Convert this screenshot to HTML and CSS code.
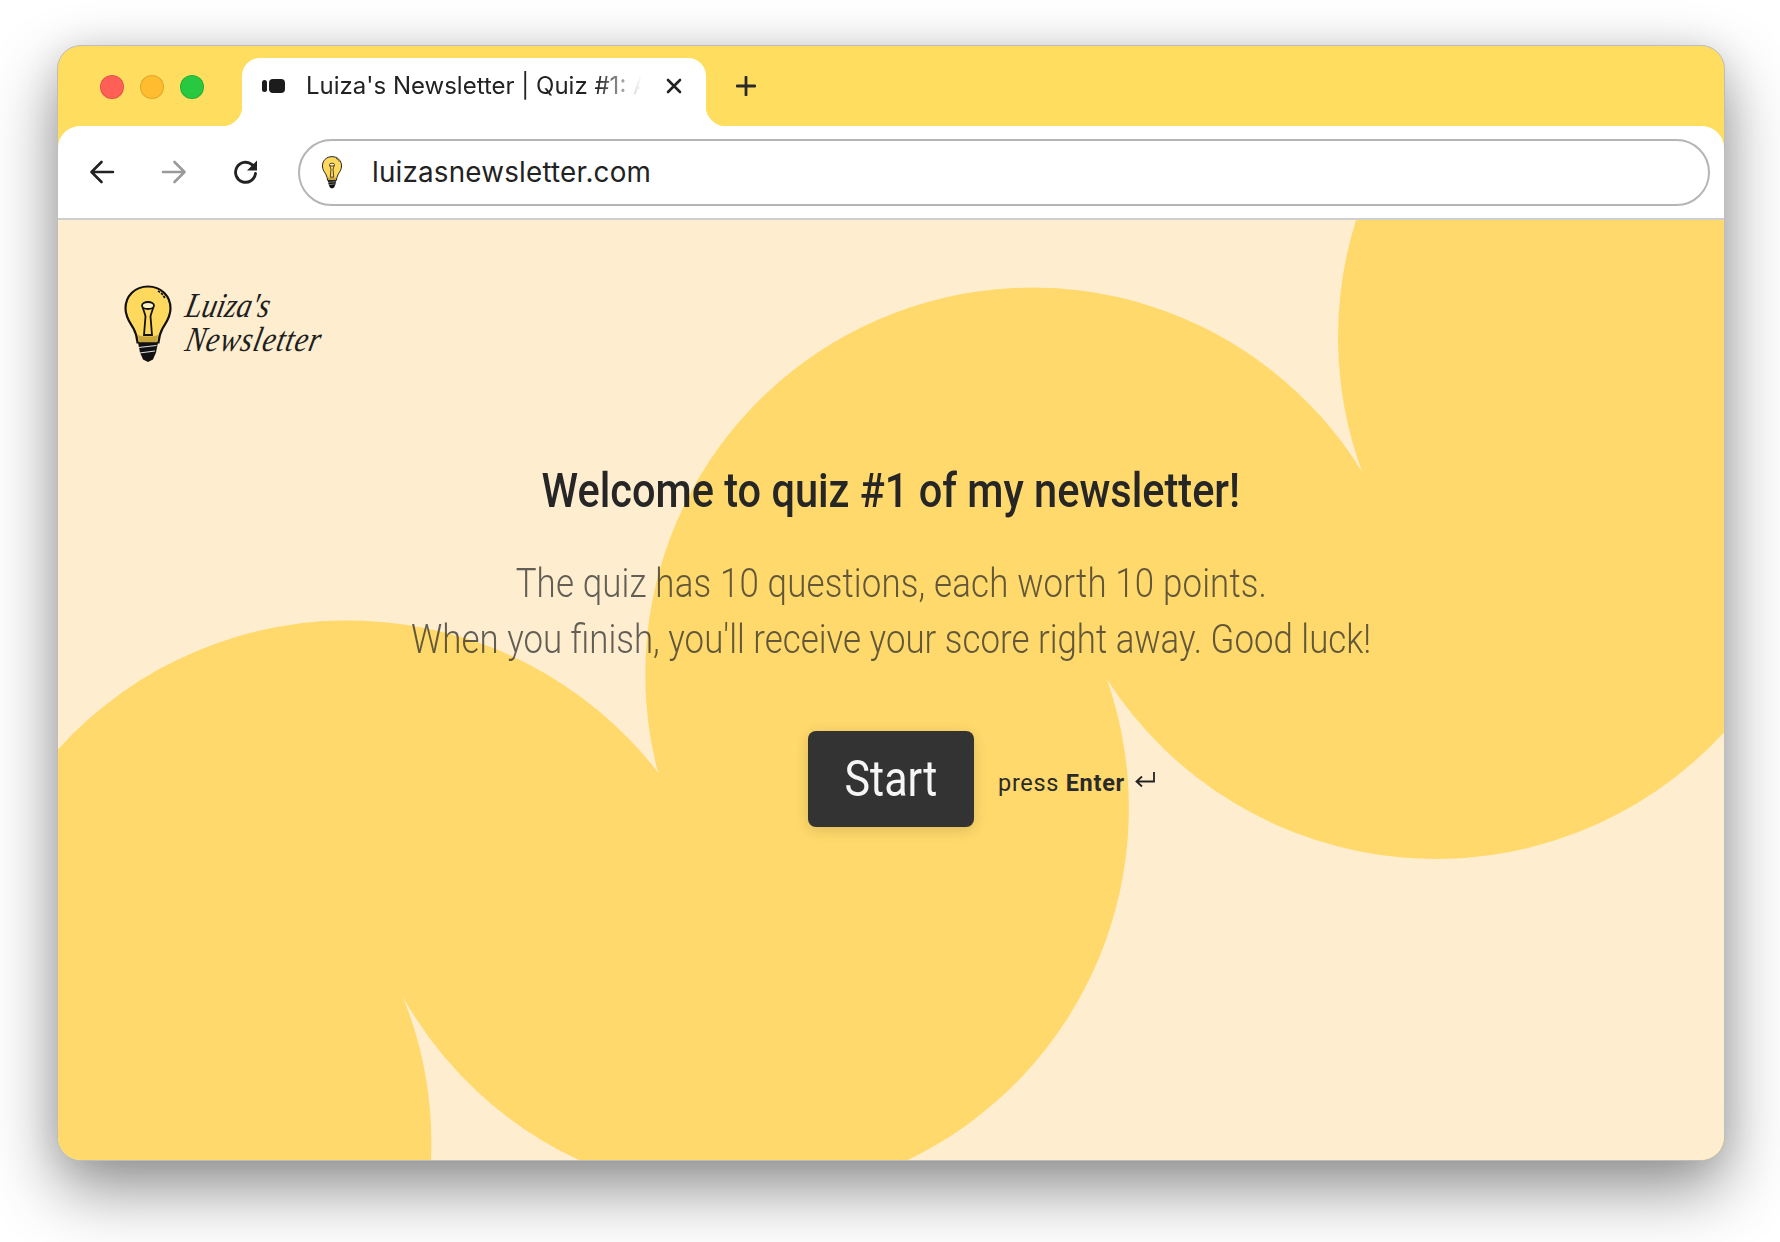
FILE: index.html
```html
<!DOCTYPE html>
<html lang="en">
<head>
<meta charset="utf-8">
<title>Luiza's Newsletter | Quiz #1</title>
<link rel="stylesheet" href="styles.css">
</head>
<body>
<svg class="defs" width="0" height="0" aria-hidden="true">
  <symbol id="bulb" viewBox="0 0 48 78">
    <path d="M24 1.500C11 1.500 1.500 11 1.500 23.500c0 9 4.500 14 8 20 2.500 4.500 3.500 8.500 4 14h21c.5-5.500 1.500-9.500 4-14 3.500-6 8-11 8-20C46.500 11 37 1.500 24 1.500z" fill="#ffd95e" stroke="#111" stroke-width="2.200"/>
    <path d="M14 50c6 2 14 2 20 0l-.8 7.500H14.800z" fill="#caa53a"/>
    <path d="M18.500 21.500c1 4 2.500 7 3 10l-.5 6-1 12.500h8l-1-12.500-.5-6c.5-3 2-6 3-10" fill="none" stroke="#111" stroke-width="1.800"/>
    <ellipse cx="24" cy="20.500" rx="6" ry="3.500" fill="#fff2c4" stroke="#111" stroke-width="1.800"/>
    <path d="M34 6c3 1.500 5.500 4 7 7.500" fill="none" stroke="#111" stroke-width="1.800" stroke-dasharray="2.500 1.200"/>
    <path d="M14 57.500h20l-1 5-1 5-3 7-5 2.500-5-2.500-3-7-1-5z" fill="#111"/>
    <path d="M14.500 62.500l18-2M15.500 68l15.500-2" stroke="#ddd" stroke-width="1.200"/>
  </symbol>
</svg>
<div class="window">
  <header class="tabstrip">
    <div class="traffic">
      <span class="light light-red"></span>
      <span class="light light-amber"></span>
      <span class="light light-green"></span>
    </div>
    <div class="tab">
      <svg class="tab-icon" viewBox="0 0 23 14"><rect x="0" y="1" width="5" height="12" rx="2.500" fill="#1c1c1c"/><rect x="7" y="0" width="16" height="14" rx="4" fill="#1c1c1c"/></svg>
      <span class="tab-title">Luiza's Newsletter | Quiz #1: A</span>
      <svg class="tab-close" viewBox="0 0 16 16"><path d="M2 2l12 12M14 2L2 14" stroke="#222" stroke-width="2.600" stroke-linecap="round"/></svg>
    </div>
    <svg class="new-tab" viewBox="0 0 20 20"><path d="M10 1v18M1 10h18" stroke="#2a2a2a" stroke-width="2.800" stroke-linecap="round"/></svg>
  </header>
  <nav class="toolbar">
    <svg class="nav-icon" viewBox="0 0 26 26"><path d="M24 13H3M12.500 3L2.500 13l10 10" fill="none" stroke="#222" stroke-width="2.600" stroke-linecap="round" stroke-linejoin="round"/></svg>
    <svg class="nav-icon nav-off" viewBox="0 0 26 26"><path d="M2 13h21M13.500 3l10 10-10 10" fill="none" stroke="#9a9a9a" stroke-width="2.600" stroke-linecap="round" stroke-linejoin="round"/></svg>
    <svg class="nav-icon nav-reload" viewBox="0 0 26 26"><path d="M22.500 14.500A10 10 0 1 1 19 5.600L22 8.500" fill="none" stroke="#222" stroke-width="2.900" stroke-linecap="round"/><path d="M24 1.500v10h-10z" fill="#222"/></svg>
    <div class="urlbar">
      <svg class="url-icon"><use href="#bulb"/></svg>
      <span class="url-text">luizasnewsletter.com</span>
    </div>
  </nav>
  <main class="page">
    <svg class="blobs" viewBox="0 0 1666 941" preserveAspectRatio="none" aria-hidden="true">
      <path d="M0 530A391 391 0 0 1 600 553A387 387 0 0 1 1304 252A391 391 0 0 1 1298 0H1666V513A391 391 0 0 1 1049 460A391 391 0 0 1 850 941H521A391 391 0 0 1 345 778A391 391 0 0 1 373 941H0Z"/>
    </svg>
    <div class="logo">
      <svg class="logo-bulb"><use href="#bulb"/></svg>
      <div class="logo-text"><span>Luiza's</span><span>Newsletter</span></div>
    </div>
    <section class="intro">
      <h1 class="title"><span class="narrow">Welcome to quiz #1 of my newsletter!</span></h1>
      <p class="lead lead-first"><span class="narrow">The quiz has 10 questions, each worth 10 points.</span></p>
      <p class="lead"><span class="narrow">When you finish, you'll receive your score right away. Good luck!</span></p>
      <div class="actions">
        <button class="start"><span class="narrow">Start</span></button>
        <span class="hint"><span>press <b>Enter</b></span>
          <svg class="return" viewBox="0 0 20 18"><path d="M19 1v9.500H2M7 5.500L1.500 10.500 7 15.500" fill="none" stroke="#222" stroke-width="1.800"/></svg>
        </span>
      </div>
    </section>
  </main>
</div>
</body>
</html>
```
FILE: styles.css
```css
* { box-sizing: border-box; }
html, body { margin: 0; height: 100%; }
body {
  width: 1780px;
  height: 1242px;
  background: #fff;
  padding: 45px 55px 0 57px;
  overflow: hidden;
  font-family: Inter, "Liberation Sans", sans-serif;
}
.defs { position: absolute; }
.window {
  width: 1668px;
  height: 1116px;
  border: 1px solid #bdbdbd;
  border-radius: 24px;
  background: #ffdd5f;
  box-shadow: 0 28px 66px rgba(0, 0, 0, .44), 0 0 34px rgba(0, 0, 0, .08);
  display: flex;
  flex-direction: column;
  overflow: hidden;
}
.tabstrip {
  height: 80px;
  flex: none;
  display: flex;
  align-items: flex-end;
  padding-left: 42px;
}
.traffic {
  display: flex;
  gap: 16px;
  align-self: flex-start;
  margin-top: 29px;
}
.light {
  width: 24px;
  height: 24px;
  border-radius: 50%;
  border: 1px solid rgba(0, 0, 0, .12);
}
.light-red { background: #ff5f57; }
.light-amber { background: #febc2e; }
.light-green { background: #28c840; }
.tab {
  position: relative;
  width: 464px;
  height: 68px;
  margin-left: 38px;
  padding: 0 24px 12px 20px;
  background: #fff;
  border-radius: 18px 18px 0 0;
  display: flex;
  align-items: center;
}
.tab::before, .tab::after {
  content: "";
  position: absolute;
  bottom: 0;
  width: 20px;
  height: 20px;
}
.tab::before { left: -20px; background: radial-gradient(circle at 0 0, transparent 20px, #fff 20.500px); }
.tab::after { right: -20px; background: radial-gradient(circle at 100% 0, transparent 20px, #fff 20.500px); }
.tab-icon { width: 23px; height: 14px; flex: none; margin-right: 21px; }
.tab-title {
  flex: 1;
  min-width: 0;
  font-size: 24px;
  line-height: 30px;
  color: #222;
  white-space: nowrap;
  overflow: hidden;
  -webkit-mask-image: linear-gradient(to right, #000 84%, transparent 97%);
  mask-image: linear-gradient(to right, #000 84%, transparent 97%);
}
.tab-close { width: 16px; height: 16px; flex: none; margin-left: 14px; }
.new-tab { width: 20px; height: 20px; align-self: flex-start; margin: 30px 0 0 30px; }
.toolbar {
  height: 94px;
  flex: none;
  position: relative;
  background: #fff;
  border-radius: 22px 22px 0 0;
  border-bottom: 2px solid #cfcfcf;
  display: flex;
  align-items: center;
  padding: 0 14px 0 31px;
}
.nav-icon { width: 26px; height: 26px; flex: none; margin-right: 46px; }
.nav-reload { margin-right: 39px; }
.urlbar {
  flex: 1;
  height: 67px;
  border: 2px solid #b5b5b5;
  border-radius: 34px;
  display: flex;
  align-items: center;
  padding-left: 21px;
}
.url-icon { width: 22px; height: 33px; flex: none; margin-right: 29px; }
.url-text {
  font-size: 27.800px;
  letter-spacing: .2px;
  color: #222;
}
.page {
  flex: 1;
  position: relative;
  background: #feeecf;
  overflow: hidden;
  padding: 65px 0 0 66px;
}
.blobs {
  position: absolute;
  inset: 0;
  width: 100%;
  height: 100%;
  fill: #ffd96b;
}
.logo {
  position: relative;
  display: flex;
  align-items: flex-start;
  gap: 14px;
  height: 78px;
}
.logo-bulb { width: 48px; height: 78px; flex: none; }
.logo-text {
  display: flex;
  flex-direction: column;
  font-family: "Liberation Serif", serif;
  font-style: italic;
  font-size: 35px;
  line-height: 36px;
  color: #1f1f1f;
  margin-top: 3px;
}
.logo-text span { display: block; white-space: nowrap; transform: skewX(-12deg) scaleX(.85); transform-origin: 0 50%; }
.logo-text span + span { letter-spacing: 1px; margin-top: -2px; }
.intro {
  position: relative;
  margin: 98px 0 0 -66px;
  display: flex;
  flex-direction: column;
  align-items: center;
  font-family: Roboto, "Liberation Sans", sans-serif;
}
.narrow { display: inline-block; white-space: nowrap; }
.title {
  margin: 0 0 35px;
  font-size: 48px;
  line-height: 60px;
  font-weight: 500;
  color: #262626;
}
.title .narrow { transform: scaleX(.865); }
.lead {
  margin: 0;
  font-size: 40px;
  line-height: 56px;
  font-weight: 300;
  color: rgba(38, 38, 38, .72);
}
.lead .narrow { transform: scaleX(.871); }
.lead-first .narrow { letter-spacing: .18px; }
.actions {
  position: relative;
  margin-top: 63px;
  display: flex;
  align-items: center;
  justify-content: center;
  width: 166px;
}
.start {
  width: 166px;
  height: 96px;
  padding: 0;
  border: 0;
  border-radius: 8px;
  background: #333;
  color: #f5f5f5;
  font: 400 50px Roboto, "Liberation Sans", sans-serif;
  box-shadow: 0 3px 14px rgba(0, 0, 0, .14);
}
.start .narrow { transform: scaleX(.86); }
.hint {
  position: absolute;
  left: 190px;
  top: 37px;
  display: flex;
  align-items: center;
  gap: 10px;
  white-space: nowrap;
  font-size: 23.500px;
  letter-spacing: .7px;
  line-height: 30px;
  color: #2a2a2a;
}
.hint b { font-weight: 700; }
.return { width: 20px; height: 18px; margin-top: -6px; }
```
